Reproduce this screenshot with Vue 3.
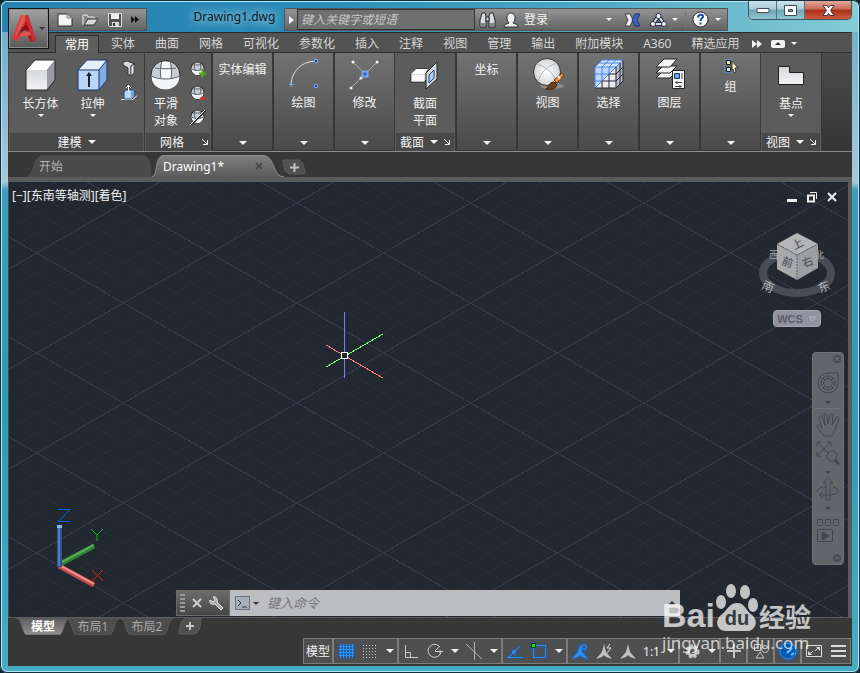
<template>
  <div class="window">
    <!-- 标题栏 -->
    <header class="titlebar">
      <button class="app-button" aria-label="应用程序菜单">
        <svg width="24" height="27" viewBox="0 0 24 27">
          <path d="M9 0h7l8 25-6 2-2-6-3-8-3-6z" fill="#b3191d" />
          <path d="M9 0h3l2 6-8 20-6-2z" fill="#d8383a" />
          <path d="M5 17c5-6 9-8 13-5l1 4c-6-2-9 0-13 4z" fill="#8e1216" />
          <path d="M10 0l5 0-8 19-4 1z" fill="#ee6a67" opacity="0.6" />
          <path d="M9 19c3-2 6-3 10-2l2 3-14 2z" fill="#e8504e" />
          <path d="M16 0l8 25-3 1L13 3z" fill="#cf3033" />
        </svg>
        <i class="caret dark"></i>
      </button>
      <div class="quick-access">
        <button aria-label="新建">
          <svg width="16" height="14" viewBox="0 0 16 14">
            <path d="M1 1h9l5 4v8H1z" fill="#f4f4f4" stroke="#2d2d2d" />
            <path d="M10 1v4h5" fill="#c5c5c5" stroke="#8b8b8b" />
          </svg>
        </button>
        <button aria-label="打开">
          <svg width="17" height="14" viewBox="0 0 17 14">
            <path d="M1 12V2h4l1 2h6v3" fill="#888" stroke="#ededed" />
            <path d="M2 12l4-6h10l-4 6z" fill="#d9d9d9" stroke="#333" />
          </svg>
        </button>
        <button aria-label="保存">
          <svg width="14" height="14" viewBox="0 0 14 14">
            <path d="M0.500 0.500h13v13h-12l-1-1z" fill="#4f5358" stroke="#e2e2e2" />
            <path d="M3 1h8v5H3z" fill="#f2f2f2" />
            <path d="M4 9h7v4H4z" fill="#dadada" />
            <path d="M5 10h2v3H5z" fill="#333" />
          </svg>
        </button>
        <button aria-label="更多">
          <svg width="8" height="7" viewBox="0 0 8 7">
            <path d="M0 0l4 3.500L0 7zM4 0l4 3.500L4 7z" fill="#111" />
          </svg>
        </button>
      </div>
      <h1 class="title">Drawing1.dwg</h1>
      <div class="info-center">
        <button class="expand" aria-label="展开">
          <svg width="5" height="8" viewBox="0 0 5 8"><path d="M0 0l5 4-5 4z" fill="#fff" /></svg>
        </button>
        <input class="search" type="text" placeholder="键入关键字或短语" aria-label="搜索" />
        <button class="ic-icon" aria-label="查找">
          <svg width="17" height="16" viewBox="0 0 17 16">
            <g fill="#d9dde0" stroke="#262626">
              <path d="M3 1h3l1 3 0 11H1V8z" />
              <path d="M14 1h-3l-1 3 0 11h6V8z" />
              <path d="M7 5h3v4H7z" />
            </g>
            <path d="M2 11h4v3H2zM11 11h4v3h-4z" fill="#7e868c" />
          </svg>
        </button>
        <button class="login">
          <svg width="16" height="16" viewBox="0 0 16 16">
            <path d="M1 15c0-3 3-3 5-4-3-3-3-10 2-10s5 7 2 10c2 1 5 1 5 4z" fill="#eceff1" stroke="#2b2b2b" />
          </svg>
          <span>登录</span>
          <i class="caret"></i>
        </button>
        <button class="ic-icon" aria-label="Exchange">
          <svg width="15" height="14" viewBox="0 0 15 14">
            <path d="M0 1h5l3 6-3 6H0l3-6z" fill="#eef0f4" stroke="#39404c" />
            <path d="M15 1h-5L7 7l3 6h5l-3-6z" fill="#3f62ba" stroke="#1f3474" />
          </svg>
        </button>
        <button class="a360" aria-label="A360">
          <svg width="17" height="14" viewBox="0 0 17 14">
            <path d="M8.500 3L3 11h11z" fill="none" stroke="#27324c" stroke-width="4" />
            <path d="M8.500 3L3 11h11z" fill="none" stroke="#dfe5f2" stroke-width="2" />
            <g fill="#f5f7fa" stroke="#27324c">
              <circle cx="8.500" cy="3" r="2.500" /><circle cx="3" cy="11" r="2.500" /><circle cx="14" cy="11" r="2.500" />
            </g>
          </svg>
          <i class="caret"></i>
        </button>
        <button class="help" aria-label="帮助">
          <svg width="17" height="17" viewBox="0 0 17 17">
            <circle cx="8.500" cy="8.500" r="7.500" fill="#f5f7fa" stroke="#2a2a2a" />
            <path d="M6 6.500c0-4 6-3.500 5-.5-.5 1.500-2.500 1.500-2.500 4" fill="none" stroke="#1c4fae" stroke-width="2" />
            <path d="M7.500 11.500h2v2h-2z" fill="#1c4fae" />
          </svg>
          <i class="caret"></i>
        </button>
      </div>
      <div class="window-buttons">
        <button aria-label="最小化">
          <svg width="14" height="7" viewBox="0 0 14 7"><path d="M1 1.500h12v4H1z" fill="#fff" stroke="#414c57" /></svg>
        </button>
        <button aria-label="最大化">
          <svg width="13" height="11" viewBox="0 0 13 11">
            <path d="M0.500 0.500h12v10H.5zM4.500 4.500v2h4v-2z" fill="#fff" fill-rule="evenodd" stroke="#414c57" />
          </svg>
        </button>
        <button class="close" aria-label="关闭">
          <svg width="13" height="11" viewBox="0 0 13 11">
            <path d="M1 .5h4l1.500 2L8 .5h4L8.500 5.500l3.500 5H8l-1.500-2-1.500 2H1l3.500-5z" fill="#fff" stroke="#4b3438" />
          </svg>
        </button>
      </div>
    </header>

    <!-- 功能区选项卡 -->
    <nav class="ribbon-tabs">
      <button v-for="tab in ribbonTabs" :key="tab" :class="{ active: tab === activeTab }" @click="activeTab = tab">
        {{ tab }}
      </button>
      <button class="tab-tool" aria-label="更多选项卡">
        <svg width="10" height="8" viewBox="0 0 10 8"><path d="M0 0l5 4-5 4zM5 0l5 4-5 4z" fill="#f2f2f2" /></svg>
      </button>
      <button class="tab-tool" aria-label="最小化功能区">
        <svg width="14" height="8" viewBox="0 0 14 8">
          <rect width="14" height="8" rx="2" fill="#f2f2f2" /><path d="M4 5l3-3 3 3z" fill="#333" />
        </svg>
        <i class="caret"></i>
      </button>
    </nav>

    <!-- 功能区面板 -->
    <section class="ribbon">
      <div class="panel full modeling">
        <div class="panel-body">
          <button class="tool wide">
            <svg width="32" height="32" viewBox="0 0 32 32">
              <path d="M1 11L10 1h20l-8 10z" fill="#fdfdfd" />
              <path d="M1 11h21v20H1z" fill="url(#boxFace)" />
              <path d="M22 11l8-10v20l-8 10z" fill="#9a9ba2" />
              <path d="M1 11L10 1h20v20l-8 10H1z" fill="none" stroke="#2a2a2a" stroke-linejoin="round" />
            </svg>
            <span>长方体</span>
            <i class="caret"></i>
          </button>
          <button class="tool wide">
            <svg width="32" height="32" viewBox="0 0 32 32">
              <path d="M1 11L10 1h20l-8 10z" fill="#e3efff" />
              <path d="M1 11h21v20H1z" fill="#b7d5f6" />
              <path d="M22 11l8-10v20l-8 10z" fill="#82abe5" />
              <path d="M1 11L10 1h20v20l-8 10H1zM1 11h21v20M22 11l8-10" fill="none" stroke="#1c3763" stroke-linejoin="round" />
              <path d="M12 28V15" stroke="#222" stroke-width="2" />
              <path d="M9 17l3-4 3 4z" fill="#222" />
            </svg>
            <span>拉伸</span>
            <i class="caret"></i>
          </button>
          <div class="small-tools">
            <button aria-label="多段体">
              <svg width="16" height="16" viewBox="0 0 16 16">
                <path d="M2 1l4-1 8 3-4 2v10l-3-2V7L2 4z" fill="#d5d9df" stroke="#333" />
                <path d="M10 5l3-2v9l-3 3z" fill="#f2f4f7" stroke="#444" />
              </svg>
            </button>
            <button aria-label="按住并拖动">
              <svg width="16" height="16" viewBox="0 0 16 16">
                <path d="M0 14.500h12l4-4" fill="none" stroke="#fff" />
                <path d="M3 7l2-2h8v7l-2 2H3z" fill="#b9d5f7" stroke="#25436f" />
                <path d="M10 7l3-2v7l-3 2z" fill="#749edc" />
                <path d="M7.500 7V1M5 3l2.500-2.500L10 3" fill="none" stroke="#fff" />
              </svg>
            </button>
          </div>
        </div>
        <button class="panel-title">建模<i class="caret big"></i></button>
      </div>

      <div class="panel full mesh">
        <div class="panel-body">
          <button class="tool">
            <svg width="32" height="32" viewBox="0 0 32 32">
              <circle cx="15.500" cy="16" r="14.500" fill="#c8cdd4" stroke="#262626" />
              <path d="M1.500 17c6 4 22 4 28 0 0 18-28 18-28 0z" fill="#f4f5f7" />
              <path d="M12 3h8v6h-8zM11 10h10v9H11z" fill="#f7f8fa" />
              <path d="M1.500 17c6 4 22 4 28 0M5 9c5 1 16 1 21 0M12 2c-2 5-2 12-1 17M20 2c2 5 2 12 1 17" fill="none" stroke="#5f6770" />
            </svg>
            <span>平滑<br />对象</span>
          </button>
          <div class="small-tools">
            <button v-for="kind in meshTools" :key="kind.id" :aria-label="kind.label">
              <svg width="16" height="16" viewBox="0 0 16 16">
                <circle cx="7.500" cy="7.500" r="6.500" fill="#c8cdd4" stroke="#262626" />
                <path d="M1.500 8c4 2 8 2 12 0-1 8-11 8-12 0z" fill="#f4f5f7" />
                <path d="M1.500 8c4 2 8 2 12 0M3 4h9M5 1c-1 3-1 5 0 8M10 1c1 3 1 5 0 8" fill="none" stroke="#5f6770" />
                <path v-if="kind.id === 'more'" d="M12.500 9v7M9 12.500h7" stroke="#56b214" stroke-width="2" />
                <path v-if="kind.id === 'less'" d="M10 13.500h6" stroke="#e0301e" stroke-width="2" />
                <path v-if="kind.id === 'refine'" d="M1 16L16 1" stroke="#333" stroke-width="2" />
                <path v-if="kind.id === 'refine'" d="M0 16L15 1" stroke="#f3f3f3" />
              </svg>
            </button>
          </div>
        </div>
        <div class="panel-title">网格<button class="launcher" aria-label="网格设置"><LauncherIcon /></button></div>
      </div>

      <button class="panel slim text-only"><span>实体编辑</span><i class="caret big"></i></button>

      <button class="panel slim">
        <svg width="32" height="32" viewBox="0 0 32 32">
          <path d="M3 26C4 13 13 4 27 3" fill="none" stroke="#dcdcdc" />
          <path d="M3 24v5M1 26.500h5" stroke="#76a9f5" />
          <path d="M26.500 1.500h3v3h-3zM26.500 26.500h3v3h-3z" fill="#233d68" stroke="#76a9f5" />
        </svg>
        <span>绘图</span><i class="caret big"></i>
      </button>

      <button class="panel slim">
        <svg width="32" height="32" viewBox="0 0 32 32">
          <path d="M4 4l12 12M28 4L2 30" stroke="#c6c6c6" stroke-dasharray="2 1" />
          <g fill="#f4f4f4"><circle cx="4" cy="4" r="1.500" /><circle cx="28" cy="4" r="1.500" /><circle cx="12" cy="20" r="1.500" /><circle cx="2" cy="30" r="1.500" /></g>
          <path d="M13.500 13.500h5v5h-5z" fill="#2d60b4" stroke="#76a9f5" stroke-width="2" />
        </svg>
        <span>修改</span><i class="caret big"></i>
      </button>

      <div class="panel full section">
        <div class="panel-body">
          <button class="tool wide">
            <svg width="32" height="32" viewBox="0 0 32 32">
              <path d="M2 15l5-5h11v10l-3 3H2z" fill="#c4c7cd" stroke="#222" />
              <path d="M2.500 15.500h13v7h-13z" fill="#f7f7f9" />
              <path d="M2 15l5-5h12l-4 5z" fill="#fff" />
              <path d="M17 14L28 3v17L17 30z" fill="#d2d5da" stroke="#222" />
              <path d="M20 16l5-5v8l-5 5z" fill="#abd0f7" stroke="#24406b" />
            </svg>
            <span>截面<br />平面</span>
          </button>
        </div>
        <div class="panel-title">截面<i class="caret big"></i><button class="launcher" aria-label="截面设置"><LauncherIcon /></button></div>
      </div>

      <button class="panel slim text-only"><span>坐标</span><i class="caret big"></i></button>

      <button class="panel slim">
        <svg width="32" height="32" viewBox="0 0 32 32">
          <ellipse cx="20" cy="28" rx="12" ry="3" fill="#8b8b8b" />
          <circle cx="15" cy="14" r="13.500" fill="url(#sphere)" stroke="#333" />
          <path d="M4 6c10 2 18 10 20 17M25 5C15 8 8 15 6 24" fill="none" stroke="#b0b3b7" />
          <path d="M22 22l8-7 2 2-7 8z" fill="#f19331" stroke="#6c3411" />
          <path d="M26 18l2 3" stroke="#fff" stroke-width="2" />
          <path d="M14 31c3-2 3-7 8-7l3 3c-1 4-7 5-11 4z" fill="#70401b" stroke="#3d200b" />
        </svg>
        <span>视图</span><i class="caret big"></i>
      </button>

      <button class="panel slim">
        <svg width="32" height="32" viewBox="0 0 32 32">
          <path d="M2 9l7-7h21l-7 7z" fill="#d5e5fb" /><path d="M2 9h21L2 30z" fill="#bdd6f9" />
          <path d="M23 9v21H2z" fill="#e9eaed" /><path d="M23 9l7-7v21l-7 7z" fill="#b6bac4" />
          <path d="M2 9h21L2 30zM2 9l7-7h21l-7 7M9 23V9l7-7M16 16V9l7-7M2 16h14M2 23h7M6 5h21" fill="none" stroke="#4a86e4" />
          <path d="M23 9v21H2M30 2v21l-7 7M23 23H9v7M16 16v14M16 16h7M27 5v21M23 16l7-7M23 23l7-7" fill="none" stroke="#20283a" />
        </svg>
        <span>选择</span><i class="caret big"></i>
      </button>

      <button class="panel slim">
        <svg width="32" height="32" viewBox="0 0 32 32">
          <g fill="#f5f5f6" stroke="#242424">
            <path d="M2 20l7-7h14l-7 7z" /><path d="M2 15l7-7h14l-7 7z" /><path d="M2 9l8-8h13l-7 8z" />
            <path d="M18.500 12.500h12v18h-12z" />
          </g>
          <path d="M20.500 15.500h5v5h-5z" fill="#6ba2ef" stroke="#1d345c" />
          <path d="M28 15v6M21 24.500h7M21 28.500h7M23 23v3M26 27v3" stroke="#444" />
        </svg>
        <span>图层</span><i class="caret big"></i>
      </button>

      <button class="panel slim">
        <svg width="16" height="16" viewBox="0 0 16 16">
          <path d="M1 1.500h9M1 14.500h9M1.500 1v14M9.500 1v14" stroke="#4d92ff" stroke-dasharray="1 1" />
          <path d="M3.500 2.500h4v4h-4z" fill="#f1e3a0" stroke="#222" /><path d="M3.500 9.500h4v4h-4z" fill="#cfe0ef" stroke="#222" />
          <path d="M9 3l6 7h-3l1 4-2 1-1-4-1 1z" fill="#f6f3c2" stroke="#333" />
        </svg>
        <span>组</span><i class="caret big"></i>
      </button>

      <div class="panel full base">
        <div class="panel-body">
          <button class="tool wide">
            <svg width="32" height="32" viewBox="0 0 32 32">
              <path d="M3.500 7.500h11v6h14v12h-25z" fill="url(#boxFace)" stroke="#1f1f1f" />
            </svg>
            <span>基点</span>
            <i class="caret"></i>
          </button>
        </div>
        <div class="panel-title">视图<i class="caret big"></i><button class="launcher" aria-label="视图设置"><LauncherIcon /></button></div>
      </div>
    </section>

    <!-- 文件选项卡 -->
    <nav class="file-tabs">
      <button class="file-tab">
        <svg class="shape" viewBox="0 0 134 22" preserveAspectRatio="none"><path d="M6 22C18 22 12 0 26 0H124C136 0 132 22 134 22z" fill="#4b4b4b" /></svg>
        <span>开始</span>
      </button>
      <button class="file-tab current">
        <svg class="shape" viewBox="0 0 134 22" preserveAspectRatio="none">
          <path d="M0 22C6 22 2 0 12 0H110C124 0 120 22 132 22z" fill="url(#tabFill)" />
          <path d="M0 22C6 22 2 .5 12 .5H110C124 .5 120 22 132 22" fill="none" stroke="#8c8c8c" />
        </svg>
        <span>Drawing1*</span>
        <svg width="8" height="8" viewBox="0 0 8 8"><path d="M1 1l6 6M7 1L1 7" stroke="#484848" stroke-width="2" /></svg>
      </button>
      <button class="file-add" aria-label="新图形">
        <svg width="24" height="16" viewBox="0 0 24 16">
          <path d="M1 1h14c6 0 7 6 8 14H9C3 15 1 8 1 1z" fill="#505050" stroke="#5c5c5c" />
          <path d="M12.500 4v9M8 8.500h9" stroke="#c0c0c0" stroke-width="2" />
        </svg>
      </button>
    </nav>

    <!-- 绘图区 -->
    <main class="viewport">
      <svg class="grid" width="100%" height="100%" shape-rendering="crispEdges">
        <path :d="minorGrid" stroke="#262d38" fill="none" />
        <path :d="majorGrid" stroke="#343b4c" fill="none" />
        <path d="M317 163l57 33" stroke="#ff7c7c" />
        <path d="M317 185l57-33" stroke="#7cff7c" />
        <path d="M335.500 130v66" stroke="#7c7cff" />
        <path d="M332.500 170.500h6v6h-6z" fill="#212830" stroke="#fff" />
      </svg>

      <div class="view-controls">
        <button>[−]</button><button>[东南等轴测]</button><button>[着色]</button>
      </div>

      <div class="doc-buttons">
        <button aria-label="最小化视口">
          <svg width="12" height="12" viewBox="0 0 12 12"><path d="M1 8h10v3H1z" fill="#eee" /></svg>
        </button>
        <button aria-label="还原视口">
          <svg width="12" height="12" viewBox="0 0 12 12">
            <path d="M4 1.500h6.500V8" fill="none" stroke="#eee" /><path d="M2 4.500h6v6H2z" fill="none" stroke="#eee" stroke-width="2" />
          </svg>
        </button>
        <button aria-label="关闭视口">
          <svg width="12" height="12" viewBox="0 0 12 12"><path d="M2 2l8 8M10 2l-8 8" stroke="#eee" stroke-width="2" /></svg>
        </button>
      </div>

      <div class="view-cube">
        <svg width="80" height="72" viewBox="0 0 80 72">
          <ellipse cx="40" cy="43" rx="34" ry="20" fill="none" stroke="#474d56" stroke-width="8" />
          <g fill="#9a9ea2" font-size="9">
            <text x="12" y="28">西</text><text x="58" y="28">北</text>
          </g>
          <path d="M40 3l21 11-21 11-20-11z" fill="#b4b5b7" />
          <path d="M20 14l20 11v25L20 39z" fill="#a7a9ab" />
          <path d="M40 25l21-11v24L40 50z" fill="#9c9ea1" />
          <path d="M20 14l20 11 21-11M40 25v25" fill="none" stroke="#5a5f65" stroke-dasharray="2 1" />
          <g fill="#51565c" font-size="11" font-weight="500">
            <text transform="rotate(-28 40 14)" x="35" y="18">上</text>
            <text transform="rotate(20 30 32)" x="25" y="36">前</text>
            <text transform="rotate(-20 50 32)" x="45" y="36">右</text>
          </g>
          <g fill="#b4b8bb" font-size="12">
            <text transform="rotate(25 11 57)" x="5" y="61">南</text>
            <text transform="rotate(-25 67 57)" x="61" y="61">东</text>
          </g>
        </svg>
        <button class="wcs">WCS
          <svg width="9" height="6" viewBox="0 0 9 6"><path d="M1 1h7L4.500 5z" fill="none" stroke="#b5b6c0" /></svg>
        </button>
      </div>

      <div class="nav-bar">
        <button class="nav-corner" aria-label="关闭导航栏">
          <svg width="8" height="8" viewBox="0 0 8 8"><circle cx="4" cy="4" r="4" fill="#4a4e52" /><path d="M2 2l4 4M6 2L2 6" stroke="#74787c" /></svg>
        </button>
        <button aria-label="控制盘">
          <svg width="24" height="24" viewBox="0 0 24 24">
            <path d="M12 2h10v10a10 10 0 1 1-10-10z" /><circle cx="12" cy="12" r="7" /><circle cx="12" cy="12" r="4.500" />
            <path d="M7 7l2 2M17 7l-2 2M7 17l2-2M17 17l-2-2" />
          </svg>
          <i class="caret"></i>
        </button>
        <hr />
        <button aria-label="平移">
          <svg width="24" height="26" viewBox="0 0 24 26">
            <path d="M8 24c-2-4-6-7-7-10 1-2 3-1 5 2L3 6c0-2 2-3 3-1l3 8L8 3c0-2 3-2 3 0l1 9 2-9c1-2 3-1 3 1l-1 9 4-7c1-2 3-1 3 1l-4 11c-1 3-2 4-3 6z" />
          </svg>
        </button>
        <button aria-label="缩放">
          <svg width="24" height="24" viewBox="0 0 24 24">
            <path d="M1 1l14 14M15 1L1 15M1 5V1h4M11 1h4v4M1 11v4h4" /><circle cx="16" cy="15" r="5" fill="#62666a" /><path d="M19 19l4 4" stroke-width="3" />
          </svg>
          <i class="caret"></i>
        </button>
        <button aria-label="动态观察">
          <svg width="24" height="24" viewBox="0 0 24 24">
            <path d="M10 23V6H7l5-5 5 5h-3v17z" /><path d="M17 10c8 2 7 8-4 8H4M7 15l-4 3 4 3M9 10c-6 0-9 3-7 5" />
          </svg>
          <i class="caret"></i>
        </button>
        <hr />
        <button aria-label="ShowMotion">
          <svg width="24" height="25" viewBox="0 0 24 25">
            <path d="M1.500 1.500h5v6h-5zM9.500 1.500h5v6h-5zM17.500 1.500h5v6h-5zM1.500 11.500h15v12h-15z" /><path d="M6 14l7 4-7 4z" fill="#43474b" />
          </svg>
        </button>
        <button class="nav-corner" aria-label="导航栏选项">
          <svg width="8" height="8" viewBox="0 0 8 8"><circle cx="4" cy="4" r="4" fill="#4a4e52" /><path d="M2 4h4" stroke="#74787c" /></svg>
        </button>
      </div>

      <svg class="ucs" width="54" height="84" viewBox="0 0 54 84">
        <path d="M6 58l34-18" stroke="#2f7f31" stroke-width="5" /><path d="M6 57l34-18" stroke="#57a857" stroke-width="2" />
        <path d="M5 60l35 19" stroke="#b94a4c" stroke-width="5" /><path d="M5 59l35 19" stroke="#f28a8b" stroke-width="2" />
        <path d="M5.500 19v42" stroke="#31548f" stroke-width="5" /><path d="M5 20v40" stroke="#567cb9" stroke-width="2" /><path d="M3 19h5v3H3z" fill="#8ab8f2" />
        <path d="M4 3.500h12L4 15.500h12" fill="none" stroke="#0b5fff" />
        <path d="M37 23l6 6 6-6M43 29v6" fill="none" stroke="#12b512" />
        <path d="M38 64l11 11M49 64L38 75" stroke="#f11818" />
      </svg>

      <div class="command-line">
        <div class="command-tools">
          <i class="grip"></i>
          <button aria-label="关闭命令行">
            <svg width="10" height="10" viewBox="0 0 10 10"><path d="M1 1l8 8M9 1L1 9" stroke="#d0d0d0" stroke-width="2" /></svg>
          </button>
          <button aria-label="自定义">
            <svg width="15" height="15" viewBox="0 0 15 15">
              <path d="M4 1l2 3-2 2-3-2C0 8 3 9 6 8l6 6 2-2-6-6c1-3-1-6-4-5z" fill="#a9a9a9" stroke="#e6e6e6" />
            </svg>
          </button>
        </div>
        <label class="command-field">
          <svg width="15" height="14" viewBox="0 0 15 14">
            <rect x="0.500" y="0.500" width="14" height="13" fill="#a7adb9" stroke="#6d7484" /><path d="M3 4l3 3-3 3M7 11h5" fill="none" stroke="#2f3542" />
          </svg>
          <i class="caret dark"></i>
          <input type="text" placeholder="键入命令" aria-label="命令" />
          <i class="caret up"></i>
        </label>
      </div>
    </main>

    <!-- 布局选项卡 -->
    <nav class="layout-tabs">
      <button v-for="name in layouts" :key="name" :class="{ current: name === activeLayout }" @click="activeLayout = name">
        <svg class="shape" viewBox="0 0 56 18" preserveAspectRatio="none">
          <path d="M0 0H56C50 0 50 17 45 18H11C6 17 6 0 0 0z" :fill="name === activeLayout ? 'url(#layoutFill)' : '#4d4d4d'" stroke="#5b5b5b" />
        </svg>
        <span>{{ name }}</span>
      </button>
      <button class="layout-add" aria-label="新建布局">
        <svg width="24" height="17" viewBox="0 0 24 17">
          <path d="M9 0h14c0 10-3 16-8 16H1C1 8 4 0 9 0z" fill="#505050" stroke="#5f5f5f" /><path d="M12 4v8M8 8h8" stroke="#c6c6c6" stroke-width="2" />
        </svg>
      </button>
    </nav>

    <!-- 状态栏 -->
    <footer class="status-bar">
      <div class="group"><button class="model">模型</button></div>
      <div class="group">
        <button class="on" aria-label="栅格">
          <svg width="16" height="16" viewBox="0 0 16 16"><path d="M2.500 1v14M5.500 1v14M8.500 1v14M11.500 1v14M14.500 1v14M1 3.500h15M1 6.500h15M1 9.500h15M1 12.500h15" stroke="#2491ff" /></svg>
        </button>
        <button aria-label="捕捉">
          <svg width="16" height="16" viewBox="0 0 16 16"><path v-for="n in 5" :key="n" :d="`M1 ${n * 3 - 0.5}h14`" stroke="#c9c9c9" stroke-dasharray="1 2" /></svg>
        </button>
        <button class="drop" aria-label="捕捉设置"><i class="caret big"></i></button>
      </div>
      <div class="group">
        <button aria-label="正交">
          <svg width="16" height="16" viewBox="0 0 16 16"><path d="M2.500 2v12.500H15M3 9.500h4.500V14" fill="none" stroke="#cdcdcd" /></svg>
        </button>
        <button aria-label="极轴">
          <svg width="16" height="16" viewBox="0 0 16 16"><path d="M12 3a6.500 6.500 0 1 0 2 6M8 8.500h8M8 8l5-5M13 7v3" fill="none" stroke="#cdcdcd" /></svg>
        </button>
        <button class="drop" aria-label="极轴设置"><i class="caret big"></i></button>
        <button aria-label="等轴测草图">
          <svg width="18" height="18" viewBox="0 0 18 18"><path d="M9.500 0v18M1 2l16 15" stroke="#b5b5b5" /></svg>
        </button>
        <button class="drop" aria-label="等轴测设置"><i class="caret big"></i></button>
      </div>
      <div class="group">
        <button class="on" aria-label="对象捕捉追踪">
          <svg width="16" height="16" viewBox="0 0 16 16"><path d="M0 14.500h16M2 14L13 3" stroke="#2491ff" /><circle cx="7" cy="9" r="2" fill="#2491ff" /></svg>
        </button>
        <button class="on" aria-label="对象捕捉">
          <svg width="16" height="16" viewBox="0 0 16 16"><path d="M2.500 2.500h12v12h-12z" fill="none" stroke="#2491ff" /><path d="M.5 .5h4v4h-4z" fill="#16e016" stroke="#053a05" /></svg>
        </button>
        <button class="drop" aria-label="对象捕捉设置"><i class="caret big"></i></button>
      </div>
      <div class="group">
        <button class="on" aria-label="注释可见性">
          <svg width="17" height="17" viewBox="0 0 17 17">
            <path d="M8 1l2 8 6 7-6-2-2-2-2 2-6 2 6-7z" fill="#2491ff" /><circle cx="12" cy="4" r="2.500" fill="#3a5f8a" stroke="#2491ff" />
          </svg>
        </button>
        <button aria-label="自动缩放">
          <svg width="17" height="17" viewBox="0 0 17 17">
            <path d="M8 1l2 8 6 7-6-2-2-2-2 2-6 2 6-7z" fill="#c2c2c2" /><path d="M14 1l-3 4h4l-4 5" fill="none" stroke="#e0e0e0" />
          </svg>
        </button>
        <button aria-label="注释比例图标">
          <svg width="17" height="17" viewBox="0 0 17 17"><path d="M8 1l2 8 6 7-6-2-2-2-2 2-6 2 6-7z" fill="#c2c2c2" /></svg>
        </button>
        <button class="scale">1:1<i class="caret big"></i></button>
      </div>
      <div class="group">
        <button aria-label="切换工作空间">
          <svg width="15" height="15" viewBox="0 0 15 15">
            <circle cx="7.500" cy="7.500" r="4" fill="none" stroke="#c6c6c6" stroke-width="3" />
            <circle cx="7.500" cy="7.500" r="6" fill="none" stroke="#c6c6c6" stroke-width="2" stroke-dasharray="3 2" />
          </svg>
        </button>
        <button class="drop" aria-label="工作空间设置"><i class="caret big"></i></button>
      </div>
      <div class="group">
        <button aria-label="注释监视器"><svg width="16" height="16" viewBox="0 0 16 16"><path d="M8 1v14M1 8h14" stroke="#c6c6c6" stroke-width="2" /></svg></button>
      </div>
      <div class="group">
        <button aria-label="隔离对象">
          <svg width="16" height="16" viewBox="0 0 16 16"><path d="M1.500 1.500h6v6h-6zM7 9l4 6H3z" fill="none" stroke="#c6c6c6" /><circle cx="12" cy="6" r="3.500" fill="none" stroke="#c6c6c6" /></svg>
        </button>
      </div>
      <div class="group">
        <button class="on" aria-label="硬件加速">
          <svg width="18" height="18" viewBox="0 0 18 18"><circle cx="9" cy="9" r="8" fill="#0559ad" stroke="#2491ff" /><path d="M8 11l5-5M12 13l3-2" stroke="#6cbcff" stroke-width="2" /></svg>
        </button>
      </div>
      <div class="group">
        <button aria-label="全屏显示">
          <svg width="16" height="14" viewBox="0 0 16 14">
            <path d="M.5 1.500h15v11H.5z" fill="none" stroke="#dcdcdc" /><path d="M10 3h4v4zM2 7v4h4z" fill="#dcdcdc" /><path d="M9 7l3-3M4 10l3-3" stroke="#dcdcdc" />
          </svg>
        </button>
        <button aria-label="自定义状态栏"><svg width="15" height="14" viewBox="0 0 15 14"><path d="M0 2h15M0 7h15M0 12h15" stroke="#dcdcdc" stroke-width="2" /></svg></button>
      </div>
    </footer>

    <!-- 水印 -->
    <div class="watermark">
      <div class="brand">
        <span class="latin">Bai</span>
        <span class="paw">
          <svg width="44" height="48" viewBox="0 0 44 48" fill="currentColor">
            <ellipse cx="6" cy="19" rx="5" ry="7" /><ellipse cx="16" cy="8" rx="5" ry="7" /><ellipse cx="30" cy="9" rx="5" ry="7" /><ellipse cx="38" cy="22" rx="5" ry="7" />
            <path d="M22 20c8 0 9 8 15 12 8 7 2 16-5 16H11C2 48-1 38 6 32c6-4 8-12 16-12z" />
          </svg>
          <b>du</b>
        </span>
        <span class="cjk">经验</span>
      </div>
      <div class="site">jingyan.baidu.com</div>
    </div>

    <svg class="defs" width="0" height="0">
      <defs>
        <linearGradient id="boxFace" x2="0" y2="1"><stop offset="0" stop-color="#d6d7da" /><stop offset="1" stop-color="#f4f4f6" /></linearGradient>
        <linearGradient id="tabFill" x2="0" y2="1"><stop offset="0" stop-color="#808080" /><stop offset="1" stop-color="#5b5b5b" /></linearGradient>
        <linearGradient id="layoutFill" x2="0" y2="1"><stop offset="0" stop-color="#5b5b5b" /><stop offset="1" stop-color="#929292" /></linearGradient>
        <radialGradient id="sphere"><stop offset="0" stop-color="#fff" /><stop offset="1" stop-color="#d3d5d8" /></radialGradient>
      </defs>
    </svg>
  </div>
</template>

<script setup>
import { ref, h } from 'vue';

const ribbonTabs = [
  '常用', '实体', '曲面', '网格', '可视化', '参数化', '插入',
  '注释', '视图', '管理', '输出', '附加模块', 'A360', '精选应用',
];
const activeTab = ref('常用');

const meshTools = [
  { id: 'more', label: '提高平滑度' },
  { id: 'less', label: '降低平滑度' },
  { id: 'refine', label: '优化网格' },
];

const layouts = ['模型', '布局1', '布局2'];
const activeLayout = ref('模型');

// 面板右下角的对话框启动箭头
const LauncherIcon = () =>
  h('svg', { width: 6, height: 6, viewBox: '0 0 6 6' }, [
    h('path', { d: 'M0 0l5 5M5.500 1v4.500H1', fill: 'none', stroke: '#f0f0f0' }),
  ]);

// 等轴测栅格：两组斜线，每 5 条为一条主线
const SLOPE = 100 / 173.5;
const SPAN = 2600;

function gridPath(step, skip) {
  let d = '';
  for (let i = -80; i < 160; i++) {
    if (skip && i % skip === 0) continue;
    const down = -45 + i * step;
    const up = 187 + i * step;
    d += `M0 ${down}L${SPAN} ${down + SPAN * SLOPE}M0 ${up}L${SPAN} ${up - SPAN * SLOPE}`;
  }
  return d;
}

const minorGrid = gridPath(20, 5);
const majorGrid = gridPath(100, 0);
</script>

<style>
body {
  margin: 0;
  background: #0d2630;
}
</style>

<style scoped>
.window {
  position: relative;
  box-sizing: border-box;
  display: flex;
  flex-direction: column;
  min-width: 860px;
  min-height: 100vh;
  padding: 0 8px 7px;
  border-radius: 7px;
  font-family: "Noto Sans", "Noto Sans CJK SC", sans-serif;
  font-size: 12px;
  line-height: 17px;
  color: #f2f2f2;
  background:
    linear-gradient(90deg, #2682b0 0%, #2a8ab6 35%, #48a5c3 65%, #86cbd6 100%) top / 100% 32px no-repeat,
    linear-gradient(180deg, #6aa9c6 0, #a9c8d8 182px, #3b9dbd 190px, #2d9ab8 60%, #47adc3 100%);
  box-shadow: inset 0 0 0 1px #10303d, inset 0 0 0 2px #b9e6f1;
}

button {
  display: flex;
  align-items: center;
  justify-content: center;
  margin: 0;
  padding: 0;
  border: 0;
  background: none;
  font: inherit;
  color: inherit;
  white-space: nowrap;
}

svg {
  flex: none;
  display: block;
}

.defs {
  position: absolute;
}

.caret {
  flex: none;
  border: 3px solid transparent;
  border-top-color: #f2f2f2;
  border-bottom: 0;
}

.caret.big {
  border-width: 4px;
  border-bottom: 0;
}

.caret.dark {
  border-top-color: #333;
}

/* 标题栏 */
.titlebar {
  display: flex;
  height: 32px;
}

.app-button {
  position: relative;
  z-index: 2;
  flex: none;
  gap: 3px;
  box-sizing: border-box;
  width: 41px;
  height: 41px;
  margin-top: 8px;
  border: 1px solid #111;
  background: linear-gradient(#a3a3a3, #595959);
  box-shadow: inset 0 0 0 1px #8c8c8c;
}

.quick-access {
  flex: none;
  display: flex;
  align-items: center;
  justify-content: center;
  gap: 9px;
  box-sizing: border-box;
  width: 98px;
  margin-top: 8px;
  height: 23px;
  border: 1px solid #555;
  border-left: 0;
  background: linear-gradient(#949494, #656565);
}

.title {
  flex: none;
  box-sizing: border-box;
  width: 137px;
  margin: 8px 0 0;
  padding-left: 38px;
  text-align: center;
  font-size: 12px;
  font-weight: 400;
  color: #0b1a22;
  text-shadow: 0 0 8px #b4dcea, 0 0 12px #a5d5e5;
}

.info-center {
  flex: 1;
  min-width: 0;
  display: flex;
  align-items: center;
  box-sizing: border-box;
  height: 23px;
  margin-top: 8px;
  border: 1px solid #555;
  background: linear-gradient(#949494, #636363);
}

.expand {
  flex: none;
  width: 12px;
}

.search {
  flex: 1;
  min-width: 0;
  height: 21px;
  box-sizing: border-box;
  padding: 0 3px;
  border: 1px solid #333;
  background: #6f6f6f;
  font: italic 12px "Noto Sans", "Noto Sans CJK SC", sans-serif;
  color: #f2f2f2;
}

.search::placeholder {
  color: #c9c9c9;
}

.ic-icon {
  flex: none;
  width: 25px;
}

.login {
  flex: none;
  box-sizing: border-box;
  width: 120px;
  gap: 5px;
  justify-content: flex-start;
  padding-left: 3px;
}

.login .caret {
  margin-left: auto;
  margin-right: 8px;
}

.a360 {
  flex: none;
  width: 38px;
  gap: 5px;
}

.help {
  flex: none;
  box-sizing: border-box;
  width: 42px;
  gap: 6px;
  margin-left: 2px;
  border-left: 1px solid #777;
}

.window-buttons {
  flex: none;
  display: flex;
  align-items: stretch;
  height: 18px;
  margin: 1px 0 0 20px;
  border: 1px solid #38545f;
  border-top: 0;
  border-radius: 0 0 5px 5px;
  overflow: hidden;
}

.window-buttons button {
  box-sizing: border-box;
  width: 28px;
  background: linear-gradient(#cfe3ea 0%, #a9cbd6 45%, #6fa5b5 50%, #8ec5d0 100%);
  border-right: 1px solid #4f7380;
}

.window-buttons .close {
  width: 46px;
  border-right: 0;
  background: linear-gradient(#e0a79b 0%, #cc6a57 45%, #a92d18 50%, #d05a41 100%);
}

/* 功能区选项卡 */
.ribbon-tabs {
  display: flex;
  box-sizing: border-box;
  height: 21px;
  padding-left: 47px;
  border-top: 1px solid #2a2a2a;
  border-bottom: 1px solid #2f2f2f;
  background: #535353;
  color: #d6d6d6;
}

.ribbon-tabs button {
  padding: 2px 10px 0;
}

.ribbon-tabs .active {
  margin: 2px 2px -1px 0;
  padding: 0 9px;
  border: 1px solid #2f2f2f;
  border-bottom: 0;
  background: #5f5f5f;
  color: #fff;
}

.ribbon-tabs .tab-tool {
  padding: 2px 6px 0 3px;
  gap: 6px;
}

/* 功能区面板 */
.ribbon {
  display: flex;
  box-sizing: border-box;
  height: 99px;
  padding-left: 1px;
  border-bottom: 1px solid #8a8a8a;
  background: linear-gradient(#4c4c4c, #353535);
}

.panel {
  flex: none;
  display: flex;
  flex-direction: column;
  box-sizing: border-box;
  width: 61px;
  border-right: 1px solid #383838;
}

.full {
  background: #5c5c5c;
}

.modeling {
  width: 136px;
}

.mesh {
  width: 67px;
}

.panel-body {
  flex: 1;
  display: flex;
  justify-content: center;
  align-items: flex-start;
  gap: 4px;
  padding-top: 6px;
}

.modeling .panel-body {
  gap: 0;
}

.tool {
  flex-direction: column;
  width: 36px;
}

.tool.wide {
  width: 52px;
}

.tool span {
  margin: 4px 0 2px;
}

.small-tools {
  display: flex;
  flex-direction: column;
  gap: 8px;
  padding: 2px;
}

.panel-title {
  display: flex;
  align-items: center;
  justify-content: center;
  gap: 6px;
  height: 18px;
  margin: 0 1px;
  background: #484848;
}

.mesh .panel-title {
  padding-left: 12px;
  gap: 18px;
}

.slim {
  justify-content: flex-start;
  gap: 4px;
  padding: 5px 0 5px;
  border: 1px solid #3a3a3a;
  border-top-width: 0;
  border-left-color: #343434;
  background: linear-gradient(#727272, #4a4a4a);
}

.slim .caret {
  margin-top: auto;
}

.text-only {
  padding-top: 8px;
}

/* 文件选项卡 */
.file-tabs {
  display: flex;
  align-items: flex-end;
  box-sizing: border-box;
  height: 30px;
  padding-left: 10px;
  border-bottom: 5px solid #5b5b5b;
  background: #373737;
}

.file-tab {
  position: relative;
  justify-content: flex-start;
  box-sizing: border-box;
  width: 134px;
  height: 22px;
  padding-left: 21px;
  color: #b2b2b2;
}

.file-tab.current {
  justify-content: space-between;
  padding: 0 23px 0 11px;
  color: #fff;
}

.shape {
  position: absolute;
  left: 0;
  top: 0;
  width: 100%;
  height: 100%;
}

.file-tab span,
.file-tab svg:last-child,
.layout-tabs span {
  position: relative;
}

.file-add {
  height: 20px;
  margin-left: -4px;
}

/* 绘图区 */
.viewport {
  flex: 1;
  position: relative;
  min-height: 435px;
  box-sizing: border-box;
  border-left: 1px solid #4a4a4a;
  border-right: 4px solid #5b5b5b;
  background: #212830;
  overflow: hidden;
}

.grid {
  position: absolute;
  inset: 0;
}

.view-controls {
  position: absolute;
  left: 3px;
  top: 5px;
  display: flex;
}

.doc-buttons {
  position: absolute;
  right: 10px;
  top: 9px;
  display: flex;
  gap: 8px;
}

.view-cube {
  position: absolute;
  right: 11px;
  top: 48px;
  display: flex;
  flex-direction: column;
  align-items: center;
  gap: 8px;
}

.wcs {
  gap: 5px;
  box-sizing: border-box;
  width: 48px;
  height: 17px;
  border: 1px solid #a6a7b4;
  border-radius: 4px;
  background: #9293a0;
  color: #5c5d68;
  font: bold 11px "Liberation Sans", sans-serif;
}

.nav-bar {
  position: absolute;
  right: 4px;
  top: 170px;
  display: flex;
  flex-direction: column;
  align-items: center;
  box-sizing: border-box;
  width: 32px;
  height: 213px;
  padding: 2px 0;
  border: 1px solid #6f7377;
  border-radius: 4px;
  background: #62666a;
}

.nav-bar button {
  flex-direction: column;
  gap: 6px;
  margin-bottom: 3px;
  fill: none;
  stroke: #43474b;
}

.nav-bar .nav-corner {
  align-self: flex-end;
  margin: 0 2px 8px;
  stroke: none;
}

.nav-bar .nav-corner:last-child {
  margin: auto 2px 0;
}

.nav-bar .caret {
  border-top-color: #3f4347;
}

.nav-bar hr {
  width: 26px;
  margin: 1px 0 3px;
  border: 0;
  border-top: 1px solid #6e7276;
}

.ucs {
  position: absolute;
  left: 45px;
  bottom: 27px;
}

/* 命令行 */
.command-line {
  position: absolute;
  left: 167px;
  right: 168px;
  bottom: 1px;
  display: flex;
  height: 26px;
}

.command-tools {
  display: flex;
  align-items: center;
  justify-content: space-between;
  box-sizing: border-box;
  width: 54px;
  padding: 0 5px 0 3px;
  border: 1px solid #6b6b6b;
  background: linear-gradient(#6c6c6c, #464646);
}

.grip {
  width: 5px;
  height: 18px;
  background: repeating-linear-gradient(#9b9b9b 0 2px, transparent 2px 4px);
}

.command-field {
  flex: 1;
  display: flex;
  align-items: center;
  gap: 3px;
  padding: 0 4px 0 5px;
  background: rgba(200, 201, 203, 0.93);
}

.command-field input {
  flex: 1;
  min-width: 0;
  padding: 0 5px;
  border: 0;
  outline: 0;
  background: none;
  font: italic 13px "Noto Sans", "Noto Sans CJK SC", sans-serif;
  color: #222;
}

.command-field input::placeholder {
  color: #777;
}

.caret.up {
  border: 4px solid transparent;
  border-bottom-color: #333;
  border-top: 0;
}

/* 布局选项卡 */
.layout-tabs {
  display: flex;
  box-sizing: border-box;
  height: 21px;
  padding-left: 8px;
  background: #373737;
  border-top: 1px solid #5b5b5b;
  color: #a9a9a9;
}

.layout-tabs button {
  position: relative;
  width: 54px;
  height: 17px;
}

.layout-tabs button:first-child {
  margin-right: -4px;
}

.layout-tabs .current {
  color: #fff;
  font-weight: 700;
}

.layout-tabs .layout-add {
  width: 24px;
  margin-left: 4px;
}

/* 状态栏 */
.status-bar {
  display: flex;
  justify-content: flex-end;
  height: 28px;
  box-sizing: border-box;
  padding: 0 1px 2px 0;
  background: #373737;
}

.group {
  display: flex;
  align-items: stretch;
  border: 1px solid #7c7c7c;
  background: #4f4f4f;
}

.group button {
  width: 24px;
}

.group button:only-child {
  width: 25px;
}

.group .model:only-child {
  width: 28px;
}

.group .drop {
  width: 15px;
}

.group .scale {
  width: 38px;
  gap: 7px;
}

.on svg {
  filter: drop-shadow(0 0 2px #0766d8);
}

/* 水印 */
.watermark {
  position: absolute;
  right: 49px;
  bottom: 18px;
  z-index: 5;
  color: rgba(255, 255, 255, 0.72);
  pointer-events: none;
}

.brand {
  display: flex;
  align-items: flex-end;
  justify-content: space-between;
  height: 48px;
}

.latin {
  font: bold 34px/32px "Liberation Sans", sans-serif;
}

.paw {
  position: relative;
}

.paw b {
  position: absolute;
  left: 0;
  right: 0;
  bottom: 3px;
  text-align: center;
  font: bold 20px/20px "Liberation Sans", sans-serif;
  color: #333a42;
}

.cjk {
  font: bold 26px/30px "Noto Sans CJK SC", sans-serif;
}

.site {
  font: 17px/24px "Noto Sans", sans-serif;
}
</style>
